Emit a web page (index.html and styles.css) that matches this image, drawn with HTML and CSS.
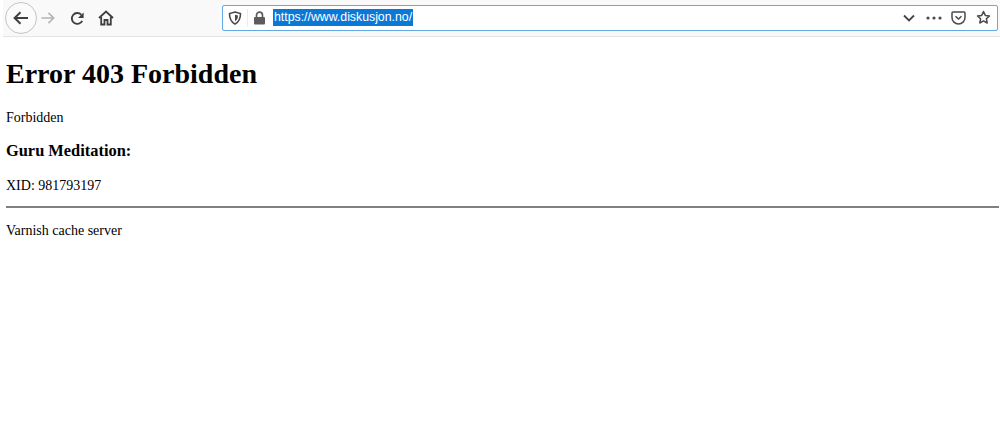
FILE: index.html
```html
<!DOCTYPE html>
<html lang="en">
<head>
<meta charset="utf-8">
<title>403 Forbidden</title>
<link rel="stylesheet" href="styles.css">
</head>
<body>
<header class="toolbar">
  <nav class="nav-buttons">
    <div class="back-btn">
      <svg class="icon" width="18" height="18" viewBox="0 0 18 18"><path d="M16 9H3M8.500 3.200 2.600 9l5.900 5.800" fill="none" stroke="#3f3f41" stroke-width="2"/></svg>
    </div>
    <svg class="icon fwd" width="16" height="16" viewBox="0 0 18 18"><path d="M1.500 9H15M9.500 3.200 15.400 9 9.500 14.800" fill="none" stroke="#b4b4b6" stroke-width="1.800"/></svg>
    <svg class="icon reload" width="15" height="15" viewBox="0 0 16 16"><path d="M13 10.500A5.800 5.800 0 1 1 12 4" fill="none" stroke="#3f3f41" stroke-width="2"/><path d="M14.500 1.500v6h-6z" fill="#3f3f41"/></svg>
    <svg class="icon home" width="16" height="16" viewBox="0 0 16 16"><path d="M1 8 8 1.500 15 8M3.200 7v7.500h3.300V10h3v4.500h3.300V7" fill="none" stroke="#3f3f41" stroke-width="1.800"/></svg>
  </nav>
  <div class="urlbar">
    <svg class="shield" width="14" height="14" viewBox="0 0 14 14"><path d="M7 1 12.500 2.500C12.500 8 11 11 7 13 3 11 1.500 8 1.500 2.500z" fill="none" stroke="#4a4a4c" stroke-width="1.600"/><path d="M7 3.800 10 4.500C10 7.500 9 9 7 10.200z" fill="#4a4a4c"/></svg>
    <span class="sep"></span>
    <svg class="lock" width="13" height="14" viewBox="0 0 13 14"><path d="M3.500 6V4.200a3 3 0 0 1 6 0V6" fill="none" stroke="#5c5c5e" stroke-width="1.700"/><rect x="1" y="6" width="11" height="7.500" rx="1" fill="#5c5c5e"/></svg>
    <span class="url">https://www.diskusjon.no/</span>
    <span class="spacer"></span>
    <svg class="chev" width="12" height="8" viewBox="0 0 12 8"><path d="M1 1.500 6 6.500 11 1.500" fill="none" stroke="#444446" stroke-width="1.800"/></svg>
    <svg class="dots" width="16" height="4" viewBox="0 0 16 4"><circle cx="2" cy="2" r="1.600"/><circle cx="8" cy="2" r="1.600"/><circle cx="14" cy="2" r="1.600"/></svg>
    <svg class="pocket" width="15" height="14" viewBox="0 0 15 14"><path d="M2 1h11a1 1 0 0 1 1 1v4.500a6.500 6.500 0 0 1-13 0V2a1 1 0 0 1 1-1z" fill="none" stroke="#4a4a4c" stroke-width="1.500"/><path d="M4.500 5.200 7.500 8l3-2.800" fill="none" stroke="#4a4a4c" stroke-width="1.500"/></svg>
    <svg class="star" width="15" height="15" viewBox="0 0 15 15"><path d="M7.500 1.500 9.300 5.400l4.200.5-3.100 2.900.8 4.200-3.700-2.100L3.800 13l.8-4.200L1.500 5.900l4.200-.5z" fill="none" stroke="#4a4a4c" stroke-width="1.500" stroke-linejoin="round"/></svg>
  </div>
</header>
<main class="content">
  <h1 class="title">Error 403 Forbidden</h1>
  <p class="para">Forbidden</p>
  <h3 class="sub">Guru Meditation:</h3>
  <p class="para">XID: 981793197</p>
  <hr class="rule">
  <p class="para">Varnish cache server</p>
</main>
</body>
</html>
```
FILE: styles.css
```css
html, body {
  margin: 0;
  padding: 0;
  background: #fff;
  height: 444px;
  overflow: hidden;
}
body {
  font-family: "Liberation Serif", "Times New Roman", serif;
  color: #000;
}
.toolbar {
  display: flex;
  align-items: center;
  height: 36px;
  margin-left: 3px;
  background: #f9f9fa;
  border-bottom: 1px solid #e4e4e6;
}
.nav-buttons {
  display: flex;
  align-items: center;
  width: 219px;
  flex: none;
}
.icon { display: block; flex: none; }
.back-btn {
  width: 30px;
  height: 30px;
  margin-left: 2px;
  border: 1px solid #c4c4c6;
  border-radius: 50%;
  background: #fbfbfb;
  display: flex;
  align-items: center;
  justify-content: center;
  flex: none;
}
.fwd { margin-left: 3px; }
.reload { margin-left: 14px; }
.home { margin-left: 13px; }
.urlbar {
  display: flex;
  align-items: center;
  box-sizing: border-box;
  width: 776px;
  height: 26px;
  margin-top: -1px;
  padding: 0 6px 0 5px;
  background: #fff;
  border: 1px solid #64a8e6;
  border-radius: 2px;
  flex: none;
}
.sep {
  width: 1px;
  height: 18px;
  margin: 0 5px 0 5px;
  background: #ececee;
}
.url {
  margin-left: 7px;
  padding: 0 1px;
  font: 12.300px/17px "Liberation Sans", Arial, sans-serif;
  background: #0a78d7;
  color: #fff;
  white-space: nowrap;
}
.spacer { flex: 1; }
.chev { margin-right: 11px; }
.dots { fill: #4a4a4c; margin-right: 9px; }
.pocket { margin-right: 10px; }
.content { padding: 0 1px 0 6px; }
.title {
  margin: 21px 0 0;
  font-size: 28px;
  line-height: 32px;
  font-weight: 700;
}
.para {
  margin: 0;
  font-size: 14px;
  line-height: 17px;
}
.title + .para { margin-top: 19px; }
.sub {
  margin: 16px 0 0;
  font-size: 16.400px;
  line-height: 18px;
  font-weight: 700;
}
.sub + .para { margin-top: 17px; }
.rule {
  margin: 12px 0 14px;
  height: 0;
  border: 0;
  border-top: 2px solid #808080;
}
```
